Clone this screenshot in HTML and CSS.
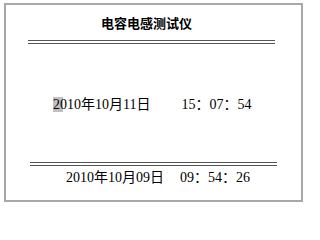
FILE: index.html
```html
<!DOCTYPE html>
<html>
<head>
<meta charset="utf-8">
<link rel="stylesheet" href="styles.css">
</head>
<body>
<div class="frame">
  <div class="title">电容电感测试仪</div>
  <div class="rule rule-top"></div>
  <div class="row row-main">
    <span class="date"><span class="sel">20</span>10年10月11日</span><span class="time time-main">15：07：54</span>
  </div>
  <div class="rule rule-bottom"></div>
  <div class="row row-foot">
    <span class="date">2010年10月09日</span><span class="time time-foot">09：54：26</span>
  </div>
</div>
</body>
</html>
```
FILE: styles.css
```css
html, body {
  margin: 0;
  padding: 0;
  background: #fff;
}
body {
  font-family: "Liberation Serif", "Noto Sans CJK SC", serif;
  color: #000;
}
.frame {
  margin: 3px 0 0 4px;
  width: 295px;
  height: 195px;
  border: 2px solid #a8a8a8;
}
.title {
  margin-top: 11px;
  padding-right: 14px;
  height: 13px;
  line-height: 13px;
  font-family: "Noto Sans CJK SC", sans-serif;
  font-size: 13px;
  font-weight: bold;
  text-align: center;
}
.rule {
  width: 247px;
  height: 2px;
  border-top: 1px solid #555;
  border-bottom: 1px solid #555;
}
.rule-top {
  margin: 11px 0 0 22px;
}
.rule-bottom {
  margin: 49px 0 0 24px;
}
.row {
  display: flex;
  height: 16px;
  line-height: 16px;
  font-size: 14px;
  white-space: nowrap;
}
.row-main {
  margin-top: 53px;
  padding-left: 47px;
}
.row-foot {
  margin-top: 4px;
  padding-left: 60px;
}
.sel {
  background: linear-gradient(to right, #c0c0c0 10px, transparent 10px);
}
.time-main {
  margin-left: 31px;
}
.time-foot {
  margin-left: 16px;
}
```
